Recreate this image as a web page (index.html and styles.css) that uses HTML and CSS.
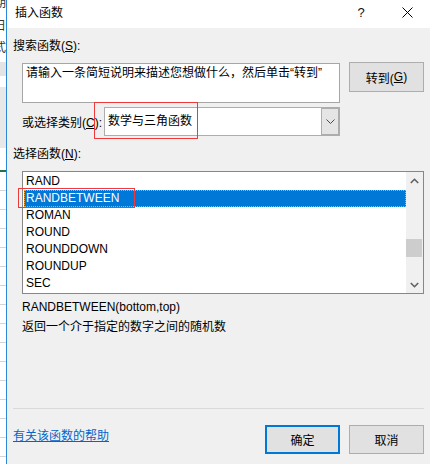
FILE: index.html
```html
<!DOCTYPE html>
<html lang="zh-CN">
<head>
<meta charset="utf-8">
<title>插入函数</title>
<link rel="stylesheet" href="styles.css">
</head>
<body>
<div class="screen">
  <div class="sheet">
    <div class="frag frag-1"><span>期</span></div>
    <div class="frag frag-2"><span>日</span></div>
    <div class="frag frag-3"><span>式</span></div>
    <div class="sh-band sh-band-1"></div>
    <div class="sh-white sh-white-1"></div>
    <div class="sh-band sh-band-2"></div>
    <div class="sh-white sh-white-2"></div>
    <div class="sh-green"></div>
    <div class="sh-grid"></div>
  </div>
  <div class="dialog">
    <div class="titlebar">
      <span class="title">插入函数</span>
      <span class="tb-btn help">?</span>
      <span class="tb-btn close">
        <svg width="11" height="11" viewBox="0 0 11 11"><path d="M0.5 0.5L10.5 10.5M10.5 0.5L0.5 10.5" stroke="#000" stroke-width="1" fill="none"/></svg>
      </span>
    </div>
    <div class="content">
      <div class="lbl l-search">搜索函数(<u>S</u>):</div>
      <div class="search-row">
        <div class="textarea">请输入一条简短说明来描述您想做什么，然后单击“转到”</div>
        <div class="btn btn-go">转到(<u>G</u>)</div>
      </div>
      <div class="cat-row">
        <span class="cat-label">或选择类别(<u>C</u>):</span>
        <div class="select">
          <span class="select-text">数学与三角函数</span>
          <span class="drop">
            <svg width="9" height="5" viewBox="0 0 9 5"><path d="M0.5 0.5L4.5 4.5L8.5 0.5" stroke="#4a4a4a" stroke-width="1" fill="none"/></svg>
          </span>
          <span class="mark mark-cat"></span>
        </div>
      </div>
      <div class="lbl l-func">选择函数(<u>N</u>):</div>
      <div class="listbox">
        <div class="items">
          <div class="item">RAND</div>
          <div class="item sel">RANDBETWEEN<span class="mark mark-item"></span></div>
          <div class="item">ROMAN</div>
          <div class="item">ROUND</div>
          <div class="item">ROUNDDOWN</div>
          <div class="item">ROUNDUP</div>
          <div class="item">SEC</div>
        </div>
        <div class="scrollbar">
          <div class="sb-btn">
            <svg width="9" height="6" viewBox="0 0 9 6"><path d="M0.8 5L4.5 1.3L8.2 5" stroke="#606060" stroke-width="1.6" fill="none"/></svg>
          </div>
          <div class="sb-track"><div class="sb-thumb"></div></div>
          <div class="sb-btn">
            <svg width="9" height="6" viewBox="0 0 9 6"><path d="M0.8 1L4.5 4.7L8.2 1" stroke="#606060" stroke-width="1.6" fill="none"/></svg>
          </div>
        </div>
      </div>
      <div class="syntax">RANDBETWEEN(bottom,top)</div>
      <div class="desc">返回一个介于指定的数字之间的随机数</div>
      <div class="sep"></div>
      <div class="footer">
        <span class="link">有关该函数的帮助</span>
        <div class="btn btn-ok">确定</div>
        <div class="btn btn-cancel">取消</div>
      </div>
    </div>
  </div>
</div>
</body>
</html>
```
FILE: styles.css
```css
* { box-sizing: border-box; }
html, body { margin: 0; padding: 0; }
body {
  width: 430px;
  height: 464px;
  overflow: hidden;
  font-family: "Liberation Sans", "Noto Sans CJK SC", sans-serif;
  font-size: 12px;
  color: #000;
  background: #fff;
}
u { text-decoration: underline; text-underline-offset: 1px; }

.screen { display: flex; height: 464px; }

/* spreadsheet peeking out on the left */
.sheet {
  width: 6px;
  flex: none;
  display: flex;
  flex-direction: column;
  overflow: hidden;
  background: #fff;
}
.frag {
  width: 6px;
  display: flex;
  justify-content: flex-end;
  overflow: hidden;
  flex: none;
  color: #333;
  font-size: 12px;
}
.frag span { flex: none; }
.frag-1 { height: 13px; line-height: 6px; }
.frag-2 { height: 20px; line-height: 26px; }
.frag-3 { height: 29px; line-height: 30px; }
.sh-band { background: #e4e4e4; flex: none; }
.sh-band-1 { height: 14px; }
.sh-white { background: #fff; flex: none; }
.sh-white-1 { height: 11px; }
.sh-band-2 { height: 61px; background: #e8e8e8; }
.sh-white-2 { height: 22px; }
.sh-green { height: 2px; background: #217346; flex: none; }
.sh-grid {
  flex: 1;
  background: repeating-linear-gradient(to bottom, #fff 0 18px, #d4d4d4 18px 19px);
}

/* dialog */
.dialog {
  flex: 1;
  min-width: 0;
  border-left: 1px solid #2b88d8;
  background: #f0f0f0;
  display: flex;
  flex-direction: column;
}
.titlebar {
  height: 28px;
  flex: none;
  background: #fff;
  display: flex;
  align-items: flex-start;
}
.title {
  flex: 1;
  padding-left: 8px;
  margin-top: 5px;
  line-height: 16px;
}
.tb-btn {
  width: 46px;
  height: 25px;
  display: flex;
  align-items: center;
  justify-content: center;
}
.help { font-size: 13px; color: #111; }

.content {
  flex: 1;
  padding: 0 6px;
  display: flex;
  flex-direction: column;
}
.lbl { line-height: 16px; }
.l-search { margin-top: 10px; }

.search-row {
  display: flex;
  align-items: flex-start;
  margin-top: 8px;
  padding-left: 9px;
}
.textarea {
  width: 318px;
  height: 40px;
  margin-top: 1px;
  border: 1px solid #a6a6a6;
  background: #fff;
  padding: 1px 0 0 3px;
  line-height: 16px;
  white-space: nowrap;
  overflow: hidden;
}
.btn {
  width: 75px;
  height: 30px;
  flex: none;
  border: 1px solid #adadad;
  background: #e1e1e1;
  display: flex;
  align-items: center;
  justify-content: center;
}
.btn-go { margin-left: 9px; }

.cat-row {
  display: flex;
  align-items: center;
  margin-top: 4px;
  padding-left: 9px;
  height: 29px;
}
.cat-label { width: 82px; flex: none; }
.select {
  position: relative;
  width: 236px;
  height: 29px;
  border: 1px solid #adadad;
  background: #fff;
  display: flex;
}
.select-text {
  flex: 1;
  padding-left: 3px;
  line-height: 27px;
}
.drop {
  width: 18px;
  height: 27px;
  border: 1px solid #adadad;
  background: #e5e5e5;
  display: flex;
  align-items: center;
  justify-content: center;
}

.mark {
  position: absolute;
  border: 1px solid #ee3a3a;
  pointer-events: none;
}
.mark-cat { left: -11px; top: -6px; width: 104px; height: 37px; }

.l-func { margin-top: 10px; }
.listbox {
  margin-top: 9px;
  margin-left: 9px;
  width: 402px;
  height: 123px;
  border: 1px solid #878787;
  background: #fff;
  display: flex;
}
.items { flex: 1; padding: 1px 0 0 1px; }
.item {
  position: relative;
  height: 17px;
  line-height: 17px;
  padding-left: 2px;
}
.item.sel {
  background: #0078d7;
  color: #fff;
  outline: 1px dotted #f5a33c;
  outline-offset: -1px;
}
.mark-item { left: -6px; top: -2px; width: 117px; height: 20px; }

.scrollbar {
  width: 17px;
  flex: none;
  background: #f0f0f0;
  display: flex;
  flex-direction: column;
}
.sb-btn {
  height: 17px;
  flex: none;
  display: flex;
  align-items: center;
  justify-content: center;
}
.sb-track { flex: 1; }
.sb-thumb {
  width: 16px;
  height: 18px;
  margin-top: 50px;
  background: #cdcdcd;
}

.syntax { margin-top: 5px; padding-left: 9px; line-height: 16px; }
.desc { margin-top: 4px; padding-left: 9px; line-height: 16px; }
.sep { margin-top: 73px; height: 1px; background: #dadada; flex: none; }

.footer {
  display: flex;
  align-items: flex-start;
  margin-top: 16px;
}
.link {
  flex: 1;
  margin-top: 3px;
  line-height: 16px;
  color: #0066cc;
  text-decoration: underline;
}
.btn-ok { height: 29px; border: 2px solid #0078d7; }
.btn-cancel { height: 29px; margin-left: 9px; }
```
